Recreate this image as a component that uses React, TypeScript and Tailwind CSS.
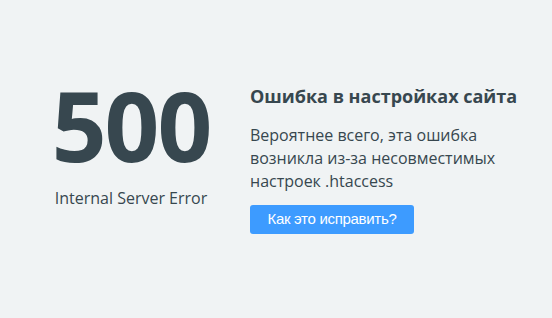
export default function App() {
  return (
    <div className="min-h-screen bg-[#f0f3f4] flex items-center font-['Open_Sans',sans-serif] text-[#37474f]">
      <div className="flex items-start gap-[40px] pl-[52px] pb-[7px]">
        <div className="flex flex-col items-center w-[158px]">
          <div className="text-[96px] font-bold leading-none tracking-[-2px]">500</div>
          <div className="mt-[15px] text-[16px] leading-5">Internal Server Error</div>
        </div>
        <div className="mt-[7px] flex flex-col items-start w-[272px]">
          <h1 className="text-[18px] font-bold leading-6">Ошибка в настройках сайта</h1>
          <p className="mt-[16px] text-[16px] leading-[23px]">
            Вероятнее всего, эта ошибка возникла из-за несовместимых настроек .htaccess
          </p>
          <button className="mt-[12px] h-[29px] w-[164px] rounded-[3px] bg-[#3d9bff] text-white text-[15px] tracking-[-0.3px] font-['Liberation_Sans',sans-serif]">
            Как это исправить?
          </button>
        </div>
      </div>
    </div>
  );
}
